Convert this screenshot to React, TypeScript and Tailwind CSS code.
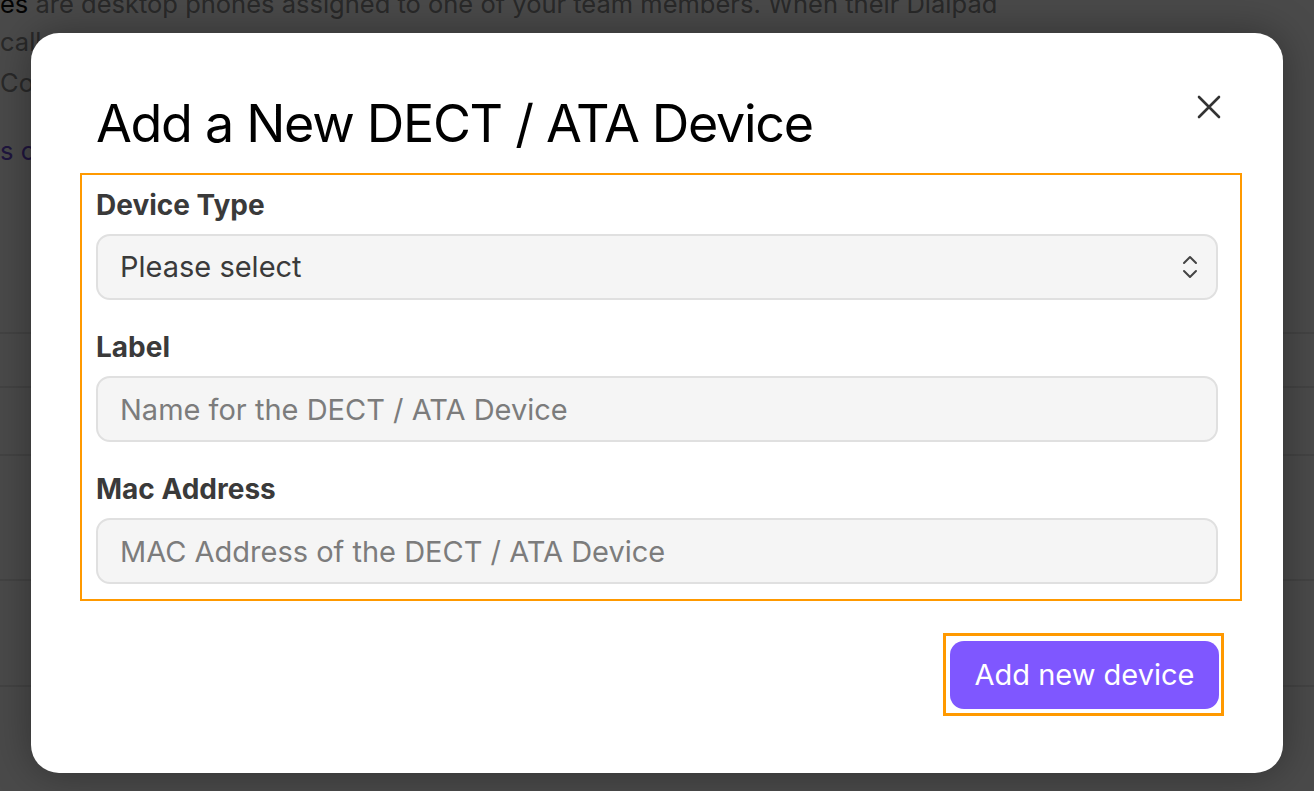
import React from "react";

const FONT = { fontFamily: "Inter, 'Noto Sans', sans-serif" };

interface FieldProps {
  label: string;
  children: React.ReactNode;
}

const Field: React.FC<FieldProps> = ({ label, children }) => (
  <div className="flex flex-col gap-3">
    <label className="text-[28px] leading-[34px] font-bold text-[#3a3a3a]">{label}</label>
    {children}
  </div>
);

const inputClass =
  "h-[66px] w-full rounded-[14px] border-2 border-[#e0e0e0] bg-[#f5f5f5] pl-[22px] pr-5 text-[29px] text-[#3a3a3a] placeholder:text-[#7c7c7c] outline-none";

const BackgroundPage: React.FC = () => (
  <div className="h-full w-full bg-white text-[25.5px] leading-[38px] text-[#8c8c8c]">
    <div className="-mt-[15px]">
      <p>
        <span className="text-[#111]">es</span> are desktop phones assigned to one of your team members. When their Dialpad
      </p>
      <p>calls</p>
      <p className="mt-[3px]">Connect</p>
      <p className="mt-[30px] text-[#6b4bd6]">s on</p>
    </div>
    <div className="mt-[96px] flex flex-col">
      <div className="h-[68px] border-b-2 border-[#e8e8e8]" />
      <div className="h-[54px] border-b-2 border-[#e8e8e8]" />
      <div className="h-[68px] border-b-2 border-[#e8e8e8]" />
      <div className="h-[125px] border-b-2 border-[#e8e8e8]" />
      <div className="h-[106px] border-b-2 border-[#e8e8e8]" />
    </div>
  </div>
);

export default function App() {
  return (
    <div className="relative h-[791px] w-[1314px] overflow-hidden" style={FONT}>
      <BackgroundPage />
      <div className="absolute inset-0 flex items-start justify-center bg-black/[0.71] pt-[33px]">
        <div className="flex h-[740px] w-[1252px] flex-col rounded-[28px] bg-white shadow-[0_0_40px_rgba(0,0,0,0.35)]">
          <div className="flex items-start justify-between pl-[65px] pr-[62px] pt-[60px]">
            <h1 className="text-[52px] leading-[62px] font-normal tracking-[-1.3px] text-black">
              Add a New DECT / ATA Device
            </h1>
            <button className="mt-[2px] text-[#333]" aria-label="Close">
              <svg width="24" height="24" viewBox="0 0 24 24" fill="none" stroke="currentColor" strokeWidth="2.6" strokeLinecap="round">
                <path d="M2 2 22 22M22 2 2 22" />
              </svg>
            </button>
          </div>

          <div className="ml-[49px] mr-[41px] mt-[18px] flex flex-col gap-[30px] border-2 border-[#ff9900] pb-[15px] pl-[14px] pr-[22px] pt-[13px]">
            <Field label="Device Type">
              <div className="relative">
                <select className={`${inputClass} appearance-none`} defaultValue="">
                  <option value="">Please select</option>
                </select>
                <svg
                  className="pointer-events-none absolute right-[20px] top-[21px] text-[#444]"
                  width="16"
                  height="24"
                  viewBox="0 0 16 24"
                  fill="none"
                  stroke="currentColor"
                  strokeWidth="2"
                  strokeLinecap="round"
                  strokeLinejoin="round"
                >
                  <path d="M2 8 8 2l6 6M2 16l6 6 6-6" />
                </svg>
              </div>
            </Field>
            <Field label="Label">
              <input className={inputClass} placeholder="Name for the DECT / ATA Device" />
            </Field>
            <Field label="Mac Address">
              <input className={inputClass} placeholder="MAC Address of the DECT / ATA Device" />
            </Field>
          </div>

          <div className="mr-[59px] mt-[32px] flex justify-end">
            <div className="border-[3px] border-[#ff9900] pb-[4px] pl-[4px] pr-[2px] pt-[5px]">
              <button className="h-[68px] w-[269px] rounded-[14px] bg-[#7f57ff] text-[29px] text-white">
                Add new device
              </button>
            </div>
          </div>
        </div>
      </div>
    </div>
  );
}
